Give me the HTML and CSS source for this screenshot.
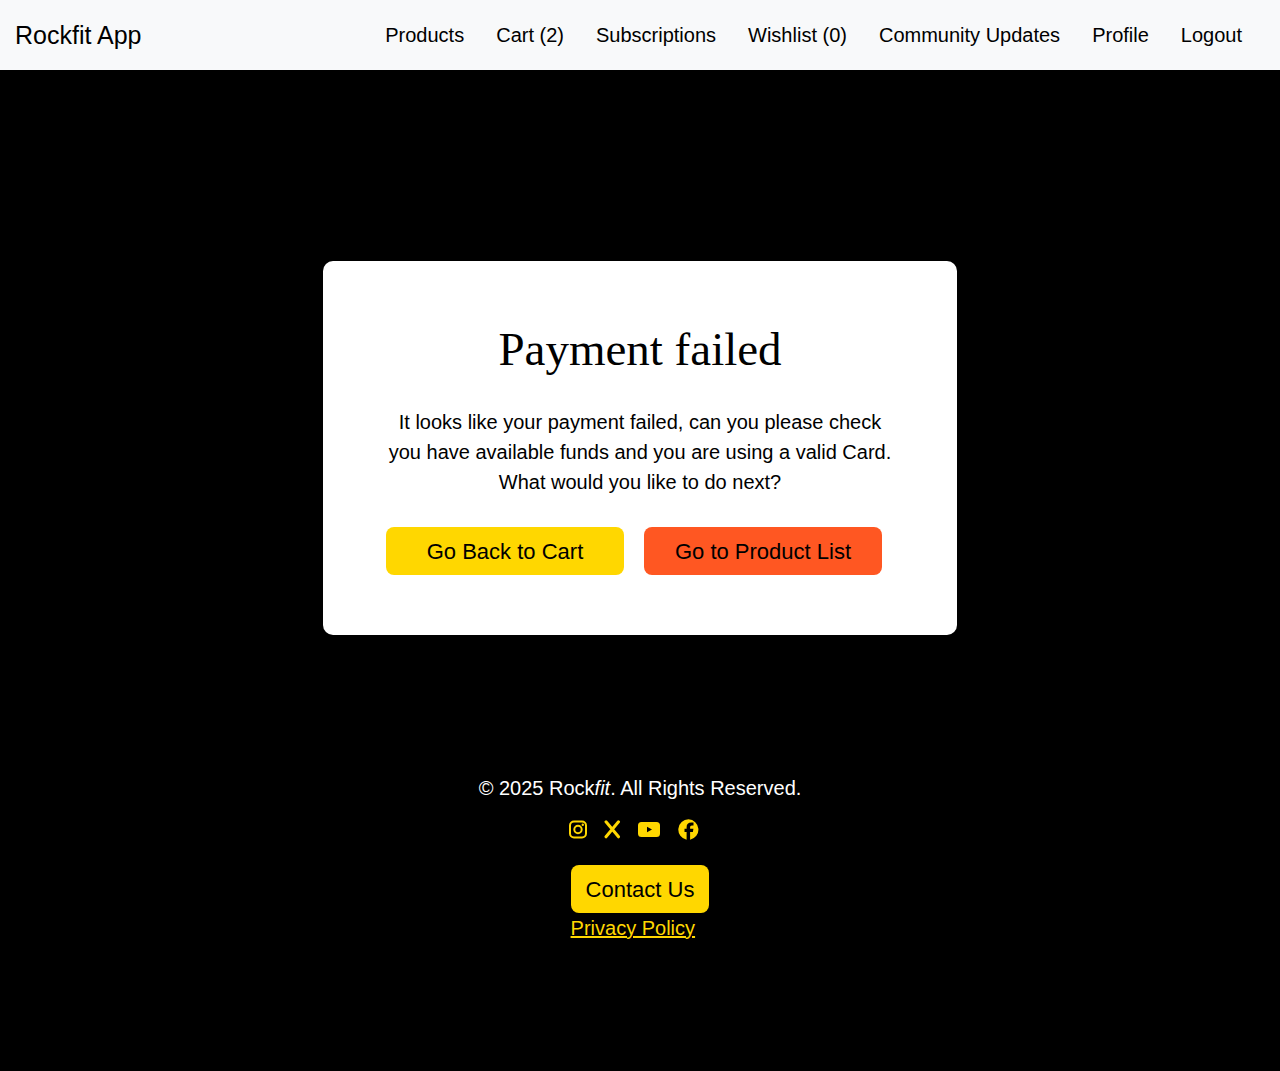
FILE: index.html
```html
<!DOCTYPE html>
<html lang="en">
<head>
<meta charset="utf-8">
<meta name="viewport" content="width=device-width, initial-scale=1">
<title>Payment failed - Rockfit App</title>
<link rel="stylesheet" href="styles.css">
</head>
<body>
<header class="navbar">
  <a class="brand" href="#">Rockfit App</a>
  <nav class="nav-links">
    <a href="#">Products</a>
    <a href="#">Cart (2)</a>
    <a href="#">Subscriptions</a>
    <a href="#">Wishlist (0)</a>
    <a href="#">Community Updates</a>
    <a href="#">Profile</a>
    <a href="#">Logout</a>
  </nav>
</header>
<main class="content">
  <section class="card">
    <h1 class="card-title">Payment failed</h1>
    <p class="card-text">It looks like your payment failed, can you please check you have available funds and you are using a valid Card. What would you like to do next?</p>
    <div class="actions">
      <button class="btn btn-yellow" type="button">Go Back to Cart</button>
      <button class="btn btn-orange" type="button">Go to Product List</button>
    </div>
  </section>
</main>
<footer class="footer">
  <p class="copyright">© 2025 Rock<em>fit</em>. All Rights Reserved.</p>
  <div class="footer-links">
    <div class="social">
      <a href="#" aria-label="Instagram"><svg width="20" height="22" viewBox="0 0 20 22"><g fill="none" stroke="currentColor" stroke-width="2"><rect x="2" y="2.500" width="16" height="16" rx="4"/><circle cx="10" cy="10.500" r="3.700"/></g><circle cx="14.800" cy="5.700" r="1.200"/></svg></a>
      <a href="#" aria-label="X"><svg width="18" height="22" viewBox="0 0 18 22"><path d="M2 2.800 14.500 17.800M14.500 2.800 2 17.800" fill="none" stroke="currentColor" stroke-width="3" stroke-linecap="round"/></svg></a>
      <a href="#" aria-label="YouTube"><svg width="24" height="22" viewBox="0 0 24 22"><path fill-rule="evenodd" d="M3.500 3h15a3.500 3.500 0 0 1 3.500 3.500v8a3.500 3.500 0 0 1-3.500 3.500h-15A3.500 3.500 0 0 1 0 14.500v-8A3.500 3.500 0 0 1 3.500 3ZM9 7.800v5.400l5-2.700Z"/></svg></a>
      <a href="#" aria-label="Facebook"><svg width="22" height="22" viewBox="0 0 22 22"><path d="M10.500.3a10.300 10.300 0 0 0-1.900 20.400V13H6.500V9.800h2.100V8.200c0-3.200 1.700-4.700 4.700-4.700h2.200v2.900H14c-1.400 0-1.900.7-1.900 2v1.400h3.300L14.900 13h-2.800v7.700A10.300 10.300 0 0 0 10.500.3Z"/></svg></a>
    </div>
    <button class="btn btn-yellow contact" type="button">Contact Us</button>
    <a class="privacy" href="#">Privacy Policy</a>
  </div>
</footer>
</body>
</html>
```
FILE: styles.css
```css
* { box-sizing: border-box; }
body {
  margin: 0;
  background: #000;
  color: #000;
  font: 20px/30px "Liberation Sans", Arial, sans-serif;
}
.navbar {
  display: flex;
  align-items: center;
  justify-content: space-between;
  min-height: 70px;
  padding: 0 38px 0 15px;
  background: #f8f9fa;
}
.navbar a { color: #000; text-decoration: none; }
.brand { font-size: 25px; }
.nav-links { display: flex; flex-wrap: wrap; column-gap: 32px; }
.content { padding: 191px 20px 0; }
.card {
  max-width: 634px;
  margin: 0 auto;
  padding: 60px 63px;
  border-radius: 10px;
  background: #fff;
  text-align: center;
}
.card-title {
  margin: 0 0 30px;
  font: 47px/56px "Liberation Serif", "Times New Roman", serif;
}
.card-text { margin: 0 0 30px; }
.actions { display: flex; gap: 20px; padding-right: 12px; }
.btn {
  height: 48px;
  padding: 0 15px;
  border: 0;
  border-radius: 8px;
  color: #000;
  font: 22px/33px "Liberation Sans", Arial, sans-serif;
  cursor: pointer;
}
.actions .btn { flex: 1; }
.btn-yellow { background: #ffd700; }
.btn-orange { background: #ff5722; }
.footer {
  display: flex;
  flex-direction: column;
  align-items: center;
  padding: 138px 20px 120px;
  color: #fff;
}
.copyright { margin: 0 0 16px; }
.footer-links { display: flex; flex-direction: column; align-items: flex-start; }
.social { display: flex; gap: 16px; margin: 0 0 24px -3px; }
.social a { display: flex; color: #ffd700; }
.social svg { fill: currentColor; }
.privacy { color: #ffd700; }
```
